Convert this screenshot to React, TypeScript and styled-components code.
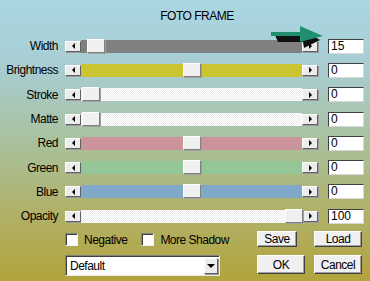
import React from 'react';
import styled, {createGlobalStyle} from 'styled-components';

const GlobalStyle = createGlobalStyle`
	html, body {
		margin: 0;
		padding: 0;
	}
	body {
		font-family: "Liberation Sans", Arial, sans-serif;
		font-size: 12px;
		letter-spacing: -0.5px;
		color: #000;
	}
`;

const Dialog = styled.div`
	position: relative;
	width: 370px;
	height: 281px;
	overflow: hidden;
	background: linear-gradient(180deg, #a9d6e3 0%, #a8cdd0 25%, #a9c19e 50%, #b0b16a 75%, #b2a43c 100%);
	box-sizing: border-box;
	padding-top: 9px;
`;

const Title = styled.div`
	height: 14px;
	line-height: 14px;
	text-align: center;
	padding-left: 24px;
	margin-bottom: 11px;
`;

const Row = styled.div`
	display: flex;
	align-items: center;
	height: 24.3px;
`;

const Label = styled.div`
	width: 58px;
	text-align: right;
	margin-right: 7px;
	line-height: 14px;
`;

const Scrollbar = styled.div`
	display: flex;
	align-items: center;
	width: 253px;
	height: 13px;
`;

const ArrowButton = styled.div`
	width: 16px;
	height: 11px;
	box-sizing: border-box;
	background: #ececec;
	border-top: 1px solid #ffffff;
	border-left: 1px solid #ffffff;
	border-right: 1px solid #606060;
	border-bottom: 1px solid #606060;
	box-shadow: 1px 1px 0 #9a9a9a;
	display: flex;
	align-items: center;
	justify-content: center;
	flex: none;
`;

const Triangle = styled.div<{$dir: 'left' | 'right' | 'down'}>`
	width: 0;
	height: 0;
	${p => p.$dir === 'left' && `
		border-top: 3px solid transparent;
		border-bottom: 3px solid transparent;
		border-right: 3px solid #000;
	`}
	${p => p.$dir === 'right' && `
		border-top: 3px solid transparent;
		border-bottom: 3px solid transparent;
		border-left: 3px solid #000;
	`}
	${p => p.$dir === 'down' && `
		border-left: 4px solid transparent;
		border-right: 4px solid transparent;
		border-top: 4px solid #000;
	`}
`;

const Track = styled.div<{$color: string; $dither?: boolean}>`
	position: relative;
	flex: 1;
	height: 13px;
	background-color: ${p => p.$color};
	${p => p.$dither && `
		background-image: repeating-conic-gradient(#ffffff 0% 25%, #ececec 0% 50%);
		background-size: 2px 2px;
	`}
`;

const Thumb = styled.div`
	position: absolute;
	top: -1px;
	width: 18px;
	height: 14px;
	box-sizing: border-box;
	background: #f0f0f0;
	border-top: 1px solid #ffffff;
	border-left: 1px solid #ffffff;
	border-right: 1px solid #808080;
	border-bottom: 1px solid #808080;
	box-shadow: 1px 1px 0 #a0a0a0;
`;

const ValueBox = styled.div`
	margin-left: 10px;
	width: 36px;
	height: 15px;
	box-sizing: border-box;
	background: #ffffff;
	border-top: 1px solid #404040;
	border-left: 1px solid #404040;
	border-right: 1px solid #d8d8d8;
	border-bottom: 1px solid #d8d8d8;
	padding-left: 2px;
	line-height: 13px;
	font-size: 12px;
	letter-spacing: 0;
`;

const Bottom = styled.div`
	display: flex;
	margin-top: 2px;
	padding-left: 65px;
`;

const LeftColumn = styled.div`
	display: flex;
	flex-direction: column;
	width: 155px;
`;

const CheckRow = styled.div`
	display: flex;
	align-items: center;
	height: 15px;
	margin-top: 2px;
	white-space: nowrap;
`;

const CheckItem = styled.label`
	display: flex;
	align-items: center;
	margin-right: 14px;
`;

const CheckBox = styled.span`
	display: inline-block;
	width: 13px;
	height: 13px;
	box-sizing: border-box;
	background: #ffffff;
	border-top: 1px solid #808080;
	border-left: 1px solid #808080;
	border-right: 1px solid #f4f4f4;
	border-bottom: 1px solid #f4f4f4;
	box-shadow: inset 1px 1px 0 #404040;
	margin-right: 6px;
`;

const Select = styled.div`
	display: flex;
	align-items: center;
	margin-top: 8px;
	width: 155px;
	height: 21px;
	box-sizing: border-box;
	background: #ffffff;
	border-top: 1px solid #808080;
	border-left: 1px solid #808080;
	border-right: 1px solid #e8e8e8;
	border-bottom: 1px solid #e8e8e8;
	box-shadow: inset 1px 1px 0 #404040;
	padding: 0 1px 0 4px;
`;

const SelectText = styled.span`
	flex: 1;
`;

const SelectButton = styled(ArrowButton)`
	width: 14px;
	height: 16px;
`;

const ButtonGrid = styled.div`
	display: grid;
	grid-template-columns: 48px 48px;
	column-gap: 9px;
	row-gap: 6px;
	margin-left: 37px;
	margin-top: 1px;
`;

const Button = styled.div<{$w?: number; $h: number}>`
	width: ${p => p.$w ? `${p.$w}px` : '100%'};
	height: ${p => p.$h}px;
	box-sizing: border-box;
	background: #f0f0f0;
	border-top: 1px solid #ffffff;
	border-left: 1px solid #ffffff;
	border-right: 1px solid #404040;
	border-bottom: 1px solid #404040;
	box-shadow: inset -1px -1px 0 #a0a0a0;
	display: flex;
	align-items: center;
	justify-content: center;
`;

const ArrowOverlay = styled.svg`
	position: absolute;
	left: 268px;
	top: 24px;
`;

type Slider = {
	label: string;
	color: string;
	dither?: boolean;
	thumb: number;
	value: string;
};

const sliders: Slider[] = [
	{label: 'Width', color: '#808080', thumb: 6, value: '15'},
	{label: 'Brightness', color: '#c9c42f', thumb: 102, value: '0'},
	{label: 'Stroke', color: '#f4f4f4', dither: true, thumb: 1, value: '0'},
	{label: 'Matte', color: '#f4f4f4', dither: true, thumb: 1, value: '0'},
	{label: 'Red', color: '#cb949a', thumb: 102, value: '0'},
	{label: 'Green', color: '#93c797', thumb: 102, value: '0'},
	{label: 'Blue', color: '#80a9c9', thumb: 102, value: '0'},
	{label: 'Opacity', color: '#f4f4f4', dither: true, thumb: 204, value: '100'},
];

const App = () => {
	return (
		<>
			<GlobalStyle/>
			<Dialog>
				<Title>FOTO FRAME</Title>
				{sliders.map(s => (
					<Row key={s.label}>
						<Label>{s.label}</Label>
						<Scrollbar>
							<ArrowButton><Triangle $dir="left"/></ArrowButton>
							<Track $color={s.color} $dither={s.dither}>
								<Thumb style={{left: s.thumb}}/>
							</Track>
							<ArrowButton><Triangle $dir="right"/></ArrowButton>
						</Scrollbar>
						<ValueBox>{s.value}</ValueBox>
					</Row>
				))}
				<Bottom>
					<LeftColumn>
						<CheckRow>
							<CheckItem><CheckBox/>Negative</CheckItem>
							<CheckItem><CheckBox/>More Shadow</CheckItem>
						</CheckRow>
						<Select>
							<SelectText>Default</SelectText>
							<SelectButton><Triangle $dir="down"/></SelectButton>
						</Select>
					</LeftColumn>
					<ButtonGrid>
						<Button $w={40} $h={16}>Save</Button>
						<Button $h={16}>Load</Button>
						<Button $h={19}>OK</Button>
						<Button $h={19}>Cancel</Button>
					</ButtonGrid>
				</Bottom>
				<ArrowOverlay width="60" height="26" viewBox="0 0 60 26">
					<path d="M7 11 L33 11 L33 5 L52 16 L36 24 L35 18 L10 18 Z" fill="#111"/>
					<path d="M3 8 L32 8 L32 2 L55 12 L32 18 L32 12 L3 12 Z" fill="#1f8f6f"/>
				</ArrowOverlay>
			</Dialog>
		</>
	);
};

export default App;
